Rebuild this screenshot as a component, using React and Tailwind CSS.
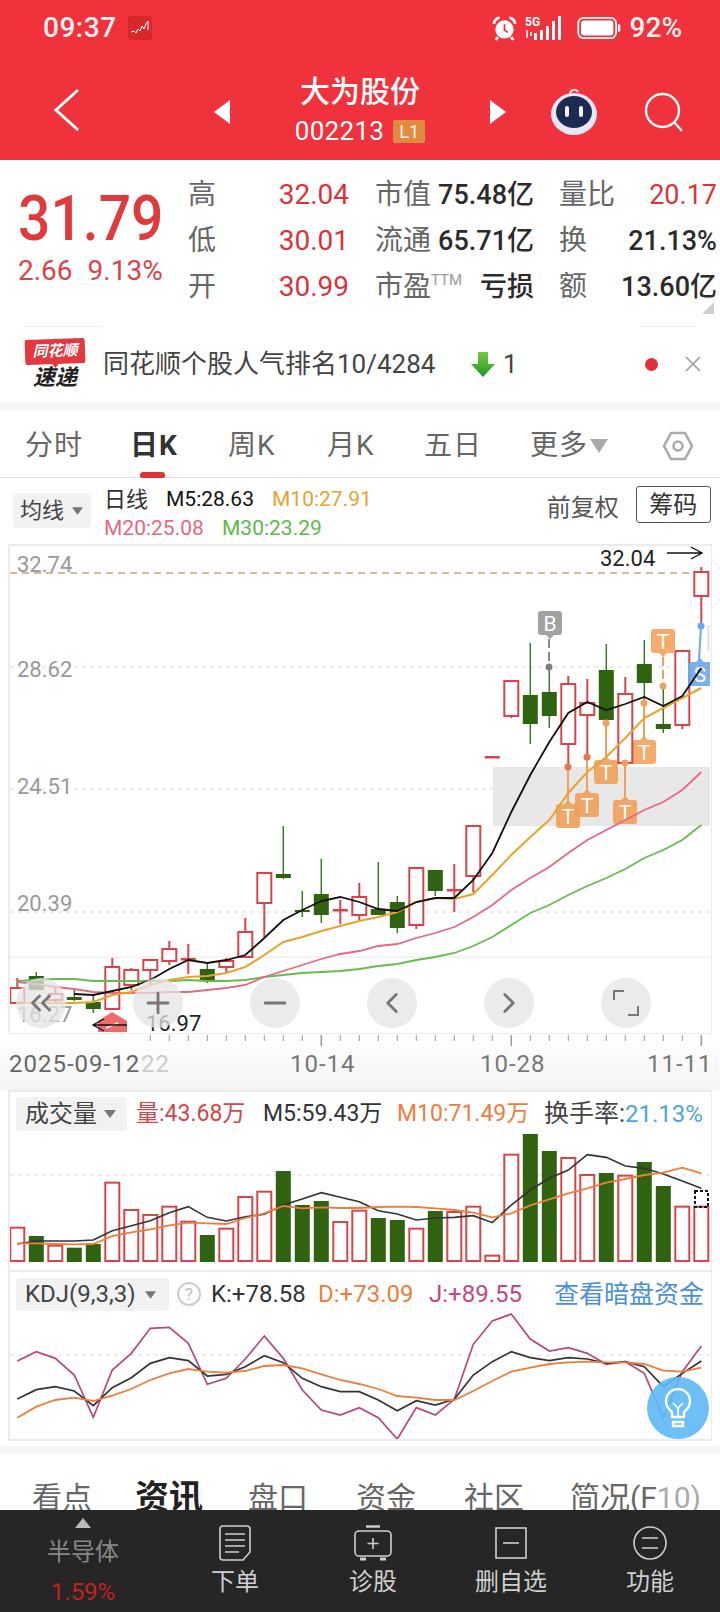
import { Plus, Minus, ChevronLeft, ChevronRight, ChevronsLeft } from 'lucide-react';

const RED = '#d9444a';
const GREEN = '#2f6310';
const cx = (i) => 17.3 + 19 * i;
const pts = (ys) => ys.map((y, i) => `${cx(i)},${y}`).join(' ');

// [body top, body bottom, wick top, wick bottom, up?]
const candles = [
  [988, 1003, 978, 1003, 1], [976, 990, 972, 990, 0], [994, 1000, 988, 1004, 1], [997, 1000, 990, 1001, 0],
  [1002, 1009, 995, 1013, 0], [967, 1009, 958, 1009, 1], [970, 985, 968, 990, 1], [960, 970, 960, 985, 1],
  [949, 961, 941, 965, 1], [958, 960, 944, 974, 1], [969, 981, 962, 983, 0], [961, 967, 958, 973, 1],
  [932, 957, 918, 957, 1], [873, 903, 873, 937, 1], [874, 878, 826, 879, 0], [910, 912, 891, 917, 0],
  [894, 915, 859, 923, 0], [909, 911, 900, 924, 1], [897, 915, 883, 920, 1], [909, 915, 862, 915, 0],
  [902, 928, 896, 933, 0], [868, 925, 868, 929, 1], [870, 891, 870, 896, 0], [889, 891, 864, 912, 1],
  [826, 876, 826, 892, 1], [756, 758, 756, 758, 1], [681, 716, 681, 718, 1], [695, 724, 643, 744, 0],
  [692, 716, 667, 728, 0], [684, 744, 676, 767, 1], [703, 715, 679, 757, 1], [670, 720, 644, 723, 0],
  [694, 763, 677, 763, 1], [664, 683, 640, 703, 0], [724, 729, 686, 733, 0], [651, 725, 651, 729, 1],
  [572, 596, 567, 626, 1],
];

const m5 = [994, 994, 994, 994, 995, 991, 987, 980, 969, 960, 963, 960, 955, 938, 920, 910, 901, 897, 902, 909, 911, 902, 898, 898, 880, 853, 812, 775, 742, 713, 702, 710, 704, 697, 706, 696, 668];
const m10 = [1002, 1003, 1003, 1003, 1002, 995, 992, 985, 980, 977, 976, 973, 967, 955, 942, 937, 931, 926, 921, 917, 912, 902, 898, 899, 894, 875, 855, 837, 820, 793, 772, 757, 738, 718, 708, 698, 688];
const m20 = [982, 984, 987, 989, 992, 993, 993, 993, 992, 992, 990, 988, 985, 977, 971, 965, 959, 954, 951, 946, 944, 938, 933, 927, 917, 905, 890, 878, 867, 853, 840, 830, 820, 810, 802, 790, 772];
const m30 = [981, 980, 979, 979, 981, 981, 981, 981, 981, 980, 981, 981, 980, 977, 975, 973, 972, 971, 969, 966, 964, 960, 957, 953, 946, 937, 925, 913, 905, 895, 886, 878, 869, 858, 850, 840, 825];

const Z = (z) => 1080 + z / 3;
const volTop = [443, 468, 497, 503, 492, 308, 390, 405, 380, 425, 465, 446, 351, 335, 273, 375, 363, 426, 392, 414, 420, 446, 393, 396, 380, 527, 224, 162, 213, 234, 285, 279, 287, 246, 318, 380, 380];
const volBlack = [492, 483, 483, 483, 480, 452, 437, 422, 398, 380, 412, 423, 410, 403, 375, 357, 338, 352, 365, 392, 402, 420, 414, 412, 407, 428, 375, 330, 295, 270, 224, 232, 258, 265, 282, 303, 325].map(Z);
const volOrange = [490, 490, 492, 493, 492, 468, 457, 448, 436, 428, 430, 432, 414, 400, 378, 385, 382, 384, 384, 381, 380, 381, 385, 390, 398, 412, 400, 376, 358, 340, 325, 308, 297, 285, 278, 263, 280].map(Z);

const K = (z) => 1265 + z / 3;
const kdjJ = [288, 260, 280, 330, 457, 315, 265, 190, 187, 235, 358, 340, 282, 213, 280, 375, 435, 450, 428, 458, 522, 428, 450, 403, 238, 168, 147, 222, 258, 248, 265, 298, 290, 325, 457, 320, 243].map(K);
const kdjK = [402, 374, 365, 378, 422, 368, 338, 295, 278, 287, 333, 328, 305, 272, 293, 340, 365, 380, 380, 405, 437, 407, 420, 403, 330, 290, 260, 278, 287, 278, 282, 295, 290, 305, 365, 325, 288].map(K);
const kdjD = [458, 425, 405, 398, 408, 392, 372, 345, 325, 312, 320, 323, 318, 303, 300, 310, 328, 345, 357, 372, 393, 398, 405, 405, 378, 348, 320, 308, 297, 292, 290, 292, 292, 297, 317, 320, 308].map(K);

const Mark = ({ x, y, label, color, up = true }) => (
  <g opacity="0.9">
    <rect x={x - 12} y={y} width="24" height="24" rx="3" fill={color} />
    <path d={up ? `M${x - 4} ${y} L${x} ${y - 4} L${x + 4} ${y}Z` : `M${x - 4} ${y + 24} L${x} ${y + 28} L${x + 4} ${y + 24}Z`} fill={color} />
    <text x={x} y={y + 20} textAnchor="middle" fontSize="21" fill="#fff">{label}</text>
  </g>
);

const Triangle = ({ className }) => (
  <svg viewBox="0 0 12 8" className={className}><path d="M0 0H12L6 8Z" fill="#777" /></svg>
);

const KChart = () => (
  <svg viewBox="10 546 700 486" className="block w-[700px] h-[486px]">
    <rect x="493" y="767" width="218" height="59" fill="#e8e8e8" />
    <rect x="707" y="625" width="4" height="26" fill="#e8e8e8" />
    <line x1="10" x2="700" y1="573" y2="573" stroke="#c4a67a" strokeWidth="1.5" strokeDasharray="7 5" />
    {[667, 789, 912].map((y) => (
      <line key={y} x1="10" x2="710" y1={y} y2={y} stroke="#dcdcdc" strokeWidth="1" strokeDasharray="4 4" />
    ))}
    <line x1="10" x2="710" y1="957" y2="957" stroke="#e8e8e8" strokeWidth="1" />
    <g fontSize="22" fill="#999">
      <text x="17" y="572">32.74</text>
      <text x="17" y="677">28.62</text>
      <text x="17" y="794">24.51</text>
      <text x="17" y="911">20.39</text>
      <text x="17" y="1022">16.27</text>
    </g>

    <Mark x={644} y={740} label="T" color="#f7a35c" />
    <Mark x={606} y={760} label="T" color="#f0a05a" />
    <Mark x={587} y={793} label="T" color="#f0a05a" />
    <Mark x={568} y={804} label="T" color="#f0a05a" />
    <Mark x={625} y={800} label="T" color="#f0a05a" />

    {candles.map(([t, b, wt, wb, up], i) => {
      const x = cx(i);
      const color = up ? RED : GREEN;
      return (
        <g key={i}>
          <line x1={x} x2={x} y1={wt} y2={wb} stroke={up ? RED : '#41762a'} strokeWidth={up ? 2 : 1.5} />
          {up ? (
            b - t < 4
              ? <rect x={x - 7.5} y={t} width="15" height="2.5" fill={RED} />
              : <rect x={x - 7} y={t} width="14" height={b - t} fill="#fff" stroke={color} strokeWidth="2" />
          ) : (
            <rect x={x - 7.5} y={t} width="15" height={b - t} fill={GREEN} />
          )}
        </g>
      );
    })}

    {[[644, 703, 740], [606, 723, 760], [587, 757, 793], [568, 767, 804], [625, 763, 800]].map(([x, a, b]) => (
      <g key={x}>
        <line x1={x} x2={x} y1={a} y2={b} stroke="#f0a05a" strokeWidth="2" />
        <circle cx={x} cy={a} r="3.5" fill={x === 568 || x === 587 ? '#e8744f' : '#f0a05a'} />
      </g>
    ))}

    <line x1="663" x2="663" y1="657" y2="686" stroke="#f0a05a" strokeWidth="2" strokeDasharray="9 4" />
    <circle cx="663" cy="686" r="3.5" fill="#f0a05a" />
    <Mark x={663} y={629} label="T" color="#f7a35c" up={false} />

    <line x1="549" x2="549" y1="639" y2="667" stroke="#8a8a8a" strokeWidth="2" strokeDasharray="9 4" />
    <circle cx="549" cy="667" r="3.5" fill="#7f7f7f" />
    <Mark x={550} y={611} label="B" color="#999999" up={false} />

    <line x1="701" x2="699" y1="626" y2="660" stroke="#6ea6e8" strokeWidth="2" />
    <circle cx="701" cy="626" r="3.5" fill="#6ea6e8" />
    <Mark x={700} y={662} label="S" color="#6ea6e8" />

    <polyline points={pts(m30)} fill="none" stroke="#66bb4f" strokeWidth="1.8" />
    <polyline points={pts(m20)} fill="none" stroke="#e6697e" strokeWidth="1.8" />
    <polyline points={pts(m10)} fill="none" stroke="#e8a32f" strokeWidth="2" />
    <polyline points={m5.slice(3).map((y, i) => `${cx(i + 3)},${y}`).join(' ')} fill="none" stroke="#111" strokeWidth="1.8" />

    <text x="600" y="566" fontSize="22" fill="#222">32.04</text>
    <path d="M667 553H701M691 547L702 553L691 559" fill="none" stroke="#111" strokeWidth="1.4" />
    <path d="M98 1033V1021L112 1012L127 1021V1033Z" fill="#ee6b6b" />
    <path d="M106 1028L118 1023" stroke="#fff" strokeWidth="1.5" />
    <text x="146" y="1031" fontSize="22" fill="#222">16.97</text>
    <path d="M127 1025H94M104 1019L93 1025L104 1031" fill="none" stroke="#111" strokeWidth="1.4" />
  </svg>
);

const RoundButton = ({ children }) => (
  <div className="w-[50px] h-[50px] rounded-full bg-[#e4e4e4]/75 flex items-center justify-center text-[#777]">{children}</div>
);

const DateAxis = () => (
  <svg viewBox="0 1034 720 56" className="block w-[720px] h-[56px]">
    {candles.map((_, i) => {
      const x = cx(i);
      if (x < 148) return null;
      const major = i === 16 || i === 26 || i === 36;
      return <line key={i} x1={x} x2={x} y1="1035" y2={major ? 1046 : 1041} stroke="#999" strokeWidth={major ? 1.5 : 1} />;
    })}
    <g fontSize="24" letterSpacing="1">
      <text x="9" y="1072" fill="#666">2025-09-12</text>
      <text x="141" y="1072" fill="#ccc">22</text>
      <text x="290" y="1072" fill="#777">10-14</text>
      <text x="480" y="1072" fill="#777">10-28</text>
      <text x="647" y="1072" fill="#777">11-11</text>
    </g>
  </svg>
);

const VolChart = () => (
  <svg viewBox="10 1133 700 135" className="block w-[700px] h-[135px]">
    <line x1="10" x2="710" y1="1175" y2="1175" stroke="#dcdcdc" strokeDasharray="4 4" />
    {volTop.map((z, i) => {
      const x = cx(i);
      const y = Z(z);
      return candles[i][4] ? (
        <rect key={i} x={x - 7} y={y} width="14" height={1261 - y} fill="#fff" stroke={RED} strokeWidth="2" />
      ) : (
        <rect key={i} x={x - 7.5} y={y} width="15" height={1262 - y} fill={GREEN} />
      );
    })}
    <polyline points={pts(volBlack)} fill="none" stroke="#333" strokeWidth="1.6" />
    <polyline points={pts(volOrange)} fill="none" stroke="#ee7e3e" strokeWidth="1.8" />
    <rect x="695" y="1191" width="13" height="16" fill="none" stroke="#111" strokeWidth="2" strokeDasharray="3 2" />
  </svg>
);

const KdjChart = () => (
  <svg viewBox="10 1312 700 127" className="block w-[700px] h-[127px]">
    <line x1="10" x2="710" y1="1355" y2="1355" stroke="#dcdcdc" strokeDasharray="4 4" />
    <polyline points={pts(kdjJ)} fill="none" stroke="#b84680" strokeWidth="1.7" />
    <polyline points={pts(kdjK)} fill="none" stroke="#333" strokeWidth="1.7" />
    <polyline points={pts(kdjD)} fill="none" stroke="#ee7e3e" strokeWidth="1.8" />
  </svg>
);

const StatusIcons = () => (
  <div className="flex items-center">
    <svg viewBox="0 0 26 26" className="w-[25px] h-[25px]" fill="none" stroke="#fff">
      <path d="M2 8c0-3 3-6 6-6M24 8c0-3-3-6-6-6M6 22l-2 3M20 22l2 3" strokeWidth="3" />
      <circle cx="13" cy="14" r="9.5" fill="#fff" stroke="none" />
      <path d="M13 8.5v6l3.5 2.5" strokeWidth="1.8" stroke="#ef323b" />
    </svg>
    <svg viewBox="0 0 42 26" className="ml-[8px] w-[42px] h-[26px]">
      <text x="0" y="11" fontSize="12" fontWeight="700" fill="#fff">5G</text>
      <path d="M2 15v8M6 17v4" stroke="#fff" strokeWidth="1.6" />
      <path d="M9 18h3v7H9zM15 15h3v10h-3zM21 11h3v14h-3zM27 6h3v19h-3zM33 1h3v24h-3z" fill="#fff" />
    </svg>
    <svg viewBox="0 0 48 26" className="ml-[10px] w-[45px] h-[24px]">
      <rect x="1" y="2" width="41" height="22" rx="6" fill="none" stroke="#fff" strokeWidth="2" />
      <rect x="4" y="5" width="35" height="16" rx="3.5" fill="#fff" />
      <rect x="44" y="9" width="2.5" height="8" rx="1" fill="#fff" />
    </svg>
    <span className="ml-[8px] text-[28px] leading-none font-medium text-white/95">92%</span>
  </div>
);

const Robot = () => (
  <svg viewBox="0 0 48 50" className="w-[48px] h-[50px]">
    <path d="M20 8c0-4 6-6 8-2" fill="none" stroke="#f4dfe4" strokeWidth="2" />
    <ellipse cx="24" cy="28" rx="23" ry="21" fill="#e9e6f6" />
    <ellipse cx="24" cy="26" rx="18" ry="16" fill="#1d2a52" />
    <rect x="15" y="20" width="4" height="11" rx="2" fill="#f4f4f8" />
    <rect x="29" y="20" width="4" height="11" rx="2" fill="#f4f4f8" />
  </svg>
);

const Header = () => (
  <div className="h-[160px] shrink-0 bg-[#ef323b] text-white">
    <div className="h-[56px] flex items-center justify-between pl-[43px] pr-[38px]">
      <div className="flex items-center">
        <span className="text-[28px] leading-none font-medium text-white/95 tracking-[0.5px]">09:37</span>
        <svg viewBox="0 0 24 24" className="ml-[11px] w-[24px] h-[24px]">
          <rect width="24" height="24" rx="3" fill="#d7282e" />
          <path d="M3 16l3-1 2 2 2-4 2 2 2-5 2 3 2-5 2-3v9" fill="none" stroke="#fff" strokeWidth="1" />
        </svg>
      </div>
      <StatusIcons />
    </div>
    <div className="h-[104px] flex items-start pl-[52px]">
      <svg viewBox="0 0 28 44" className="mt-[32px] w-[28px] h-[44px]">
        <path d="M26 2L4 22L26 42" fill="none" stroke="#fff" strokeWidth="3" />
      </svg>
      <svg viewBox="0 0 16 24" className="mt-[44px] ml-[134px] w-[16px] h-[24px]"><path d="M16 0V24L0 12Z" fill="#fff" /></svg>
      <div className="w-[260px] flex flex-col items-center">
        <div className="mt-[18px] text-[30px] leading-[36px] font-medium">大为股份</div>
        <div className="mt-[9px] flex items-center">
          <span className="text-[26px] leading-[24px] tracking-[0.3px]">002213</span>
          <span className="ml-[9px] w-[32px] h-[23px] bg-[#e28a40] rounded-[2px] text-[18px] leading-[23px] text-center text-white/90">L1</span>
        </div>
      </div>
      <svg viewBox="0 0 16 24" className="mt-[44px] w-[16px] h-[24px]"><path d="M0 0V24L16 12Z" fill="#fff" /></svg>
      <div className="mt-[30px] ml-[44px]"><Robot /></div>
      <svg viewBox="0 0 40 40" className="mt-[36px] ml-[46px] w-[40px] h-[40px]" fill="none" stroke="#fff" strokeWidth="2.4">
        <circle cx="18.5" cy="18.5" r="16.5" />
        <path d="M30 30l8 9" />
      </svg>
    </div>
  </div>
);

const quoteRows = [
  { a: '高', v: '32.04', b: '市值', bv: '75.48亿', c: '量比', cv: '20.17', red: true },
  { a: '低', v: '30.01', b: '流通', bv: '65.71亿', c: '换', cv: '21.13%' },
  { a: '开', v: '30.99', b: '市盈', ttm: true, bv: '亏损', c: '额', cv: '13.60亿' },
];

const Quote = () => (
  <div className="h-[166px] shrink-0 flex relative">
    <div className="w-[188px] pl-[18px] pt-[27px]">
      <div className="text-[57px] leading-[64px] font-medium text-[#e03a3e] scale-y-[1.1] origin-center">31.79</div>
      <div className="mt-[6px] flex text-[28px] leading-[28px] text-[#d9444a]">
        <span>2.66</span>
        <span className="ml-[15px]">9.13%</span>
      </div>
    </div>
    <div className="pt-[12px] flex flex-col">
      {quoteRows.map((r) => (
        <div key={r.a} className="h-[46px] flex items-center text-[#666] text-[28px] leading-none">
          <div className="w-[161px] flex justify-between items-center">
            <span>{r.a}</span>
            <span className="text-[#d9343a]">{r.v}</span>
          </div>
          <div className="ml-[26px] w-[159px] flex justify-between items-center">
            <span className="flex items-start">
              {r.b}
              {r.ttm && <span className="text-[15px] text-[#999]">TTM</span>}
            </span>
            <span className="text-[27px] font-medium text-[#2b2b2b]">{r.bv}</span>
          </div>
          <div className="ml-[25px] w-[158px] flex justify-between items-center">
            <span>{r.c}</span>
            <span className={r.red ? 'text-[27px] text-[#d9343a]' : 'text-[27px] font-medium text-[#2b2b2b]'}>{r.cv}</span>
          </div>
        </div>
      ))}
    </div>
    <svg viewBox="0 0 12 12" className="absolute right-[6px] bottom-[12px] w-[12px] h-[12px]"><path d="M12 0V12H0Z" fill="#cfcfcf" /></svg>
  </div>
);

const RankRow = () => (
  <div className="h-[76px] shrink-0 relative flex items-center pl-[25px]">
    <div className="absolute top-0 left-[25px] w-[77px] h-px bg-[#eee]" />
    <div className="absolute top-0 left-[640px] w-[55px] h-px bg-[#eee]" />
    <div className="w-[60px] flex flex-col items-center">
      <div className="relative w-[60px] h-[25px] bg-[#e2383e] rounded-[2px] -rotate-2 text-white text-[15px] leading-[25px] font-bold italic text-center">
        同花顺
        <div className="absolute -bottom-[4px] left-[26px] w-0 h-0 border-x-[4px] border-x-transparent border-t-[5px] border-t-[#e2383e]" />
      </div>
      <div className="mt-[3px] text-[22px] leading-[22px] font-bold italic text-[#222]">速递</div>
    </div>
    <span className="ml-[18px] w-[333px] text-[26px] leading-none text-[#444] whitespace-nowrap">同花顺个股人气排名10/4284</span>
    <svg viewBox="0 0 24 26" className="ml-[35px] w-[24px] h-[26px]">
      <defs>
        <linearGradient id="gd" x1="0" y1="0" x2="0" y2="1">
          <stop offset="0" stopColor="#7ac943" />
          <stop offset="1" stopColor="#189a22" />
        </linearGradient>
      </defs>
      <path d="M7 1h10v12h7L12 26L0 13h7Z" fill="url(#gd)" />
    </svg>
    <span className="ml-[8px] text-[26px] leading-none text-[#444]">1</span>
    <div className="ml-[127px] w-[13px] h-[13px] rounded-full bg-[#e2303a]" />
    <svg viewBox="0 0 16 16" className="ml-[27px] w-[16px] h-[16px]"><path d="M1 1L15 15M15 1L1 15" stroke="#999" strokeWidth="1.5" /></svg>
  </div>
);

const tabs = [
  { t: '分时', w: 'w-[105px]' },
  { t: '日K', w: 'w-[98px]', active: true },
  { t: '周K', w: 'w-[99px]' },
  { t: '月K', w: 'w-[97px]' },
  { t: '五日', w: 'w-[106px]' },
];

const TabRow = () => (
  <div className="h-[68px] shrink-0 relative flex items-center pl-[25px] pt-[4px] border-b border-[#e3e3e3] text-[28px] leading-none text-[#666]">
    {tabs.map((tab) => (
      <span key={tab.t} className={`${tab.w} tracking-[1px] ${tab.active ? 'font-bold text-[#333]' : ''}`}>{tab.t}</span>
    ))}
    <span className="tracking-[1px]">更多</span>
    <svg viewBox="0 0 18 14" className="ml-[2px] w-[18px] h-[14px]"><path d="M0 0H18L9 14Z" fill="#aaa" /></svg>
    <svg viewBox="0 0 32 32" className="ml-[54px] w-[32px] h-[32px]" fill="none" stroke="#aaa" strokeWidth="2.6">
      <path d="M9 3H23L30 16L23 29H9L2 16Z" strokeLinejoin="round" />
      <circle cx="16" cy="16" r="4.5" />
    </svg>
    <div className="absolute left-[140px] -bottom-px w-[25px] h-[6px] rounded-t-[3px] rounded-b-[2px] bg-[#d9343a]" />
  </div>
);

const LegendRow = () => (
  <div className="h-[66px] shrink-0 flex items-start pl-[13px]">
    <div className="mt-[15px] w-[78px] h-[35px] rounded-[4px] bg-[#f2f2f2] flex items-center pl-[7px] text-[22px] leading-none text-[#444]">
      均线
      <Triangle className="ml-[8px] w-[11px] h-[8px]" />
    </div>
    <div className="ml-[13px] mt-[7px] text-[21px] leading-[29px] whitespace-nowrap">
      <div className="flex">
        <span className="w-[62px] text-[22px] text-[#333]">日线</span>
        <span className="w-[106px] text-[#111]">M5:28.63</span>
        <span className="text-[#e8a32f]">M10:27.91</span>
      </div>
      <div className="flex">
        <span className="w-[118px] text-[#e6697e]">M20:25.08</span>
        <span className="text-[#5db94a]">M30:23.29</span>
      </div>
    </div>
    <span className="ml-[175px] mt-[16px] text-[24px] leading-[28px] text-[#555] whitespace-nowrap">前复权</span>
    <div className="ml-[17px] mt-[8px] w-[75px] h-[37px] rounded-[3px] border border-[#555] flex items-center justify-center text-[24px] leading-none text-[#333]">筹码</div>
  </div>
);

const ChartPanel = () => (
  <div className="relative ml-[8px] w-[704px] h-[490px] shrink-0 border-2 border-b-1 border-r-1 border-[#ececec] overflow-hidden">
    <KChart />
    <div className="absolute left-[6px] top-[432px] flex gap-[67px]">
      <RoundButton><ChevronsLeft size={34} strokeWidth={2} /></RoundButton>
      <RoundButton><Plus size={34} strokeWidth={2} /></RoundButton>
      <RoundButton><Minus size={34} strokeWidth={2} /></RoundButton>
      <RoundButton><ChevronLeft size={34} strokeWidth={2} /></RoundButton>
      <RoundButton><ChevronRight size={34} strokeWidth={2} /></RoundButton>
      <RoundButton>
        <svg viewBox="0 0 26 26" className="w-[26px] h-[26px]" fill="none" stroke="#777" strokeWidth="2">
          <path d="M1 10V1H11M25 16V25H15" />
        </svg>
      </RoundButton>
    </div>
  </div>
);

const VolumePanel = () => (
  <div className="ml-[8px] w-[704px] h-[180px] shrink-0 border-2 border-b-0 border-r-1 border-[#ececec] overflow-hidden">
    <div className="h-[41px] flex items-start pl-[6px] pt-[5px] text-[23px] leading-[34px] whitespace-nowrap">
      <div className="w-[111px] h-[34px] rounded-[4px] bg-[#f2f2f2] flex items-center pl-[9px] text-[24px] text-[#444]">
        成交量
        <Triangle className="ml-[7px] w-[12px] h-[8px]" />
      </div>
      <span className="ml-[9px] w-[127px] text-[#d9444a]">量:43.68万</span>
      <span className="w-[134px] text-[#333]">M5:59.43万</span>
      <span className="w-[147px] text-[#ee7e3e]">M10:71.49万</span>
      <span className="text-[25px] text-[#444]">换手率:</span>
      <span className="text-[24px] text-[#4ea5dd]">21.13%</span>
    </div>
    <VolChart />
  </div>
);

const KdjPanel = () => (
  <div className="ml-[8px] w-[704px] h-[171px] shrink-0 border-2 border-r-1 border-[#ececec] overflow-hidden">
    <div className="h-[40px] flex items-start pl-[6px] pt-[6px] text-[24px] leading-[33px] whitespace-nowrap">
      <div className="w-[153px] h-[33px] rounded-[4px] bg-[#f2f2f2] flex items-center pl-[9px] text-[#444]">
        KDJ(9,3,3)
        <Triangle className="ml-[9px] w-[11px] h-[8px]" />
      </div>
      <div className="ml-[8px] mt-[4px] w-[24px] h-[24px] rounded-full border-2 border-[#ccc] text-[#bbb] text-[17px] leading-[20px] text-center">?</div>
      <span className="ml-[10px] w-[107px] text-[#333]">K:+78.58</span>
      <span className="w-[111px] text-[#ee7e3e]">D:+73.09</span>
      <span className="w-[125px] text-[#c8457f]">J:+89.55</span>
      <span className="text-[25px] text-[#4a8fdc]">查看暗盘资金</span>
    </div>
    <KdjChart />
  </div>
);

const bottomTabs = [
  { t: '看点', w: 'w-[103px]' },
  { t: '资讯', w: 'w-[113px]', active: true },
  { t: '盘口', w: 'w-[108px]' },
  { t: '资金', w: 'w-[108px]' },
  { t: '社区', w: 'w-[106px]' },
];

const InfoTabs = () => (
  <div className="h-[56px] shrink-0 overflow-hidden flex items-start pl-[32px] pt-[27px] text-[30px] leading-[34px] text-[#666] whitespace-nowrap">
    {bottomTabs.map((tab) => (
      <span key={tab.t} className={`${tab.w} ${tab.active ? 'text-[34px] leading-[32px] font-bold text-[#222]' : ''}`}>{tab.t}</span>
    ))}
    <span>简况(F<span className="text-[#aaa]">10)</span></span>
  </div>
);

const DockItem = ({ label, w, children }) => (
  <div className={`${w} flex flex-col items-center pt-[15px]`}>
    <div className="h-[36px] flex items-center justify-center">{children}</div>
    <span className="mt-[7px] text-[24px] leading-[28px] text-[#cfcfcf]">{label}</span>
  </div>
);

const Dock = () => (
  <div className="h-[102px] shrink-0 bg-[#262626] flex">
    <div className="w-[166px] flex flex-col items-center pt-[8px]">
      <svg viewBox="0 0 16 10" className="w-[16px] h-[10px]"><path d="M8 0L16 10H0Z" fill="#bbb" /></svg>
      <span className="mt-[10px] text-[24px] leading-[28px] text-[#888]">半导体</span>
      <span className="mt-[12px] text-[24px] leading-[28px] text-[#c42020]">1.59%</span>
    </div>
    <DockItem label="下单" w="w-[138px]">
      <svg viewBox="0 0 32 36" className="w-[32px] h-[36px]" fill="none" stroke="#cfcfcf" strokeWidth="1.6">
        <path d="M4 1H28A3 3 0 0 1 31 4V27L24 35H4A3 3 0 0 1 1 32V4A3 3 0 0 1 4 1Z" />
        <path d="M6 9H26M6 15H26M6 21H26M6 27H20" />
      </svg>
    </DockItem>
    <DockItem label="诊股" w="w-[138px]">
      <svg viewBox="0 0 38 36" className="w-[38px] h-[36px]" fill="none" stroke="#cfcfcf" strokeWidth="1.6">
        <path d="M12 1.5H26" strokeWidth="2.4" />
        <rect x="1" y="6" width="36" height="25" rx="4" />
        <path d="M6 34H12M26 34H32" strokeWidth="3" />
        <path d="M19 13V24M13.5 18.5H24.5" />
      </svg>
    </DockItem>
    <DockItem label="删自选" w="w-[138px]">
      <svg viewBox="0 0 32 32" className="w-[32px] h-[32px]" fill="none" stroke="#cfcfcf" strokeWidth="1.6">
        <rect x="1" y="1" width="30" height="30" />
        <path d="M8 16H24" />
      </svg>
    </DockItem>
    <DockItem label="功能" w="w-[140px]">
      <svg viewBox="0 0 34 34" className="w-[34px] h-[34px]" fill="none" stroke="#cfcfcf" strokeWidth="1.6">
        <circle cx="17" cy="17" r="16" />
        <path d="M9 12H25M9 22H25" />
      </svg>
    </DockItem>
  </div>
);

const Bulb = () => (
  <div className="absolute left-[647px] top-[1377px] w-[62px] h-[62px] rounded-full bg-[#5db9f5]/90 flex items-center justify-center">
    <svg viewBox="0 0 28 40" className="w-[28px] h-[40px]" fill="none" stroke="#fff" strokeWidth="2.4">
      <path d="M8 24C4 21 2 17 2 13A12 12 0 0 1 26 13C26 17 24 21 20 24V29H8Z" strokeLinejoin="round" />
      <path d="M14 29V20M9 15L14 20L19 15" strokeWidth="1.6" />
      <path d="M9 34H19V38H9Z" />
    </svg>
  </div>
);

const App = () => (
  <div className="relative w-[720px] h-[1612px] overflow-hidden bg-white flex flex-col font-['Roboto','Noto_Sans_CJK_SC',sans-serif]">
    <Header />
    <Quote />
    <RankRow />
    <div className="h-[8px] shrink-0 bg-[#f5f5f5]" />
    <TabRow />
    <LegendRow />
    <ChartPanel />
    <div className="h-[56px] shrink-0 bg-gradient-to-b from-white to-[#f4f4f4]"><DateAxis /></div>
    <VolumePanel />
    <KdjPanel />
    <div className="h-[5px] shrink-0" />
    <div className="h-[8px] shrink-0 bg-[#f5f5f5]" />
    <InfoTabs />
    <Dock />
    <Bulb />
  </div>
);

export default App;
